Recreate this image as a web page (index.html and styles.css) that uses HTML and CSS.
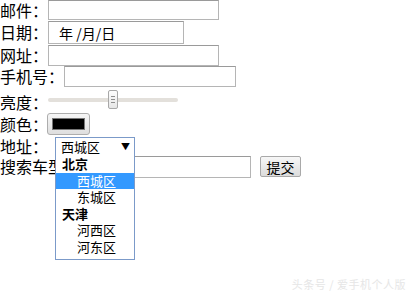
FILE: index.html
```html
<!DOCTYPE html>
<html>
<head>
<meta charset="utf-8">
<link rel="stylesheet" href="styles.css">
</head>
<body>
<form class="form">
  <div class="row r1"><span class="label">邮件：</span><span class="input w171 h20"></span></div>
  <div class="row r2"><span class="label">日期：</span><span class="input date"><span class="date-text">年 /月/日</span></span></div>
  <div class="row r3"><span class="label">网址：</span><span class="input w171 h21"></span></div>
  <div class="row r4"><span class="label">手机号：</span><span class="input w172 h21"></span></div>
  <div class="row r5"><span class="label low">亮度：</span>
    <span class="range"><span class="track"></span><span class="thumb"><i></i><i></i><i></i></span></span>
  </div>
  <div class="row r6"><span class="label">颜色：</span><span class="color"><span class="swatch"></span></span></div>
  <div class="row r7"><span class="label">地址：</span>
    <span class="select-wrap">
      <span class="select"><span class="sel-text">西城区</span><span class="arrow">▼</span></span>
      <span class="dropdown">
        <span class="group">北京</span>
        <span class="opt active">西城区</span>
        <span class="opt">东城区</span>
        <span class="group">天津</span>
        <span class="opt">河西区</span>
        <span class="opt">河东区</span>
      </span>
    </span>
  </div>
  <div class="row r8"><span class="label">搜索车型：</span><span class="input search"></span><span class="button">提交</span></div>
</form>
<div class="watermark">头条号 / 爱手机个人版</div>
</body>
</html>
```
FILE: styles.css
```css
html, body {
  margin: 0;
  padding: 0;
  background: #fff;
}
body {
  width: 410px;
  height: 297px;
  overflow: hidden;
  position: relative;
  font-family: "Noto Sans CJK SC", "Noto Sans", sans-serif;
  color: #000;
}
.form {
  display: flex;
  flex-direction: column;
}
.row {
  display: flex;
  align-items: flex-start;
}
.label {
  font-size: 16px;
  line-height: 21px;
  white-space: nowrap;
}
.input {
  display: block;
  box-sizing: border-box;
  border: 1px solid #b5b5b5;
  border-top-color: #9a9a9a;
  background: #fff;
}
.w171 { width: 171px; }
.w172 { width: 172px; }
.h20 { height: 20px; }
.h21 { height: 21px; }
.r1 { height: 21px; }
.r2 { height: 24px; }
.r3 { height: 21px; }
.r4 { height: 22px; }
.r2 .label { line-height: 23px; }
.date {
  width: 136px;
  height: 23px;
  display: flex;
  align-items: center;
  padding-left: 10px;
}
.date-text {
  font-size: 14px;
  line-height: 16px;
}
.r5 {
  height: 24px;
  position: relative;
}
.label.low {
  padding-top: 4px;
}
.range {
  position: relative;
  width: 130px;
  height: 22px;
  margin-top: 1px;
}
.track {
  position: absolute;
  left: 0;
  right: 0;
  top: 9px;
  height: 4px;
  background: #e3e0db;
  border-radius: 2px;
}
.thumb {
  position: absolute;
  left: 60px;
  top: 1px;
  width: 10px;
  height: 19px;
  box-sizing: border-box;
  border: 1px solid #a8a8a8;
  border-radius: 2px;
  background: linear-gradient(#fdfdfd, #e6e6e6);
  display: flex;
  flex-direction: column;
  justify-content: center;
  align-items: center;
  gap: 2px;
}
.thumb i {
  display: block;
  width: 4px;
  height: 1px;
  background: #8e8e8e;
}
.r6 {
  height: 24px;
  align-items: center;
}
.color {
  display: flex;
  align-items: center;
  justify-content: center;
  box-sizing: border-box;
  width: 43px;
  height: 22px;
  margin-left: -1px;
  border: 1px solid #adadad;
  border-radius: 3px;
  background: linear-gradient(#f6f6f6, #dedede);
}
.swatch {
  display: block;
  width: 33px;
  height: 12px;
  background: #000;
  border: 1px solid #777;
  box-sizing: border-box;
}
.r7 {
  height: 20px;
  position: relative;
  z-index: 2;
}
.r7 .label { line-height: 20px; }
.select-wrap {
  position: relative;
  margin-left: 7px;
  margin-top: 1px;
}
.select {
  display: flex;
  align-items: center;
  justify-content: space-between;
  box-sizing: border-box;
  width: 80px;
  height: 19px;
  border: 1px solid #7b9ac9;
  background: #fff;
  padding: 0 4px 0 5px;
  font-size: 13px;
}
.sel-text { line-height: 17px; }
.arrow {
  font-size: 9px;
  line-height: 17px;
}
.dropdown {
  position: absolute;
  left: 0;
  top: 18px;
  width: 80px;
  box-sizing: border-box;
  border: 1px solid #7b9ac9;
  border-top: none;
  background: #fff;
  display: flex;
  flex-direction: column;
  padding: 1px 0 3px;
  font-size: 13px;
}
.group {
  font-weight: bold;
  line-height: 16.6px;
  padding-left: 6px;
}
.opt {
  line-height: 16.6px;
  padding-left: 21px;
}
.opt.active {
  background: #3399ff;
  color: #fff;
}
.r8 {
  height: 22px;
}
.search {
  width: 171px;
  height: 22px;
}
.button {
  display: flex;
  align-items: center;
  justify-content: center;
  box-sizing: border-box;
  width: 41px;
  height: 21px;
  margin-left: 9px;
  border: 1px solid #a9a9a9;
  border-radius: 2px;
  background: linear-gradient(#f7f7f7, #dcdcdc);
  font-size: 14px;
}
.watermark {
  position: absolute;
  right: 4px;
  bottom: 5px;
  font-size: 11px;
  color: #e6e6e6;
  letter-spacing: 0.5px;
}
```
